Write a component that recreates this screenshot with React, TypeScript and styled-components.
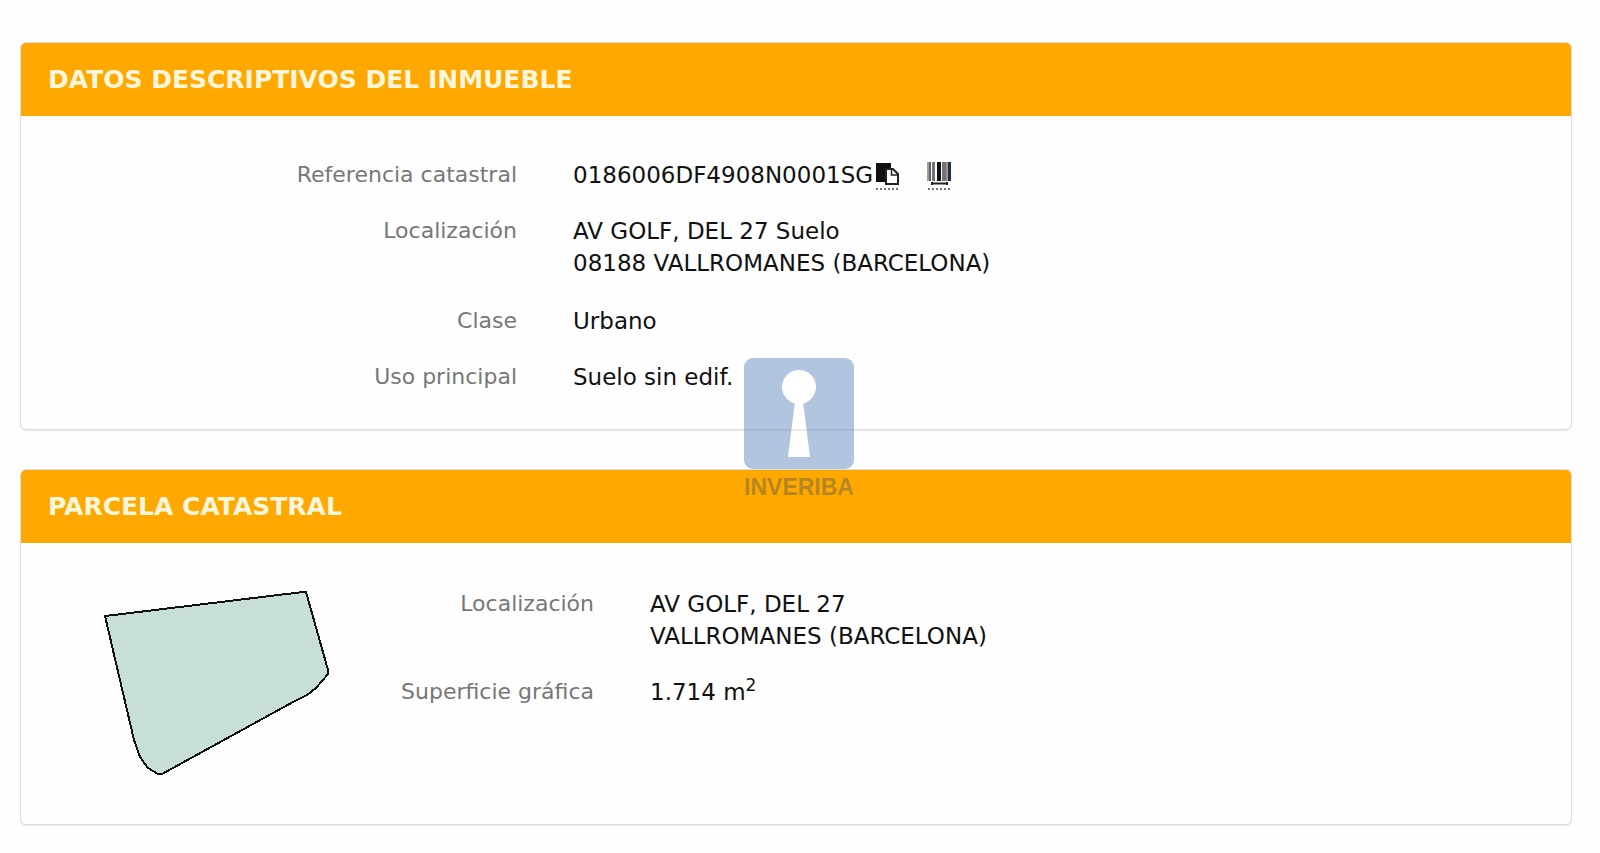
import React from 'react';
import styled, { createGlobalStyle } from 'styled-components';

const GlobalStyle = createGlobalStyle`
  body {
    margin: 0;
    background: #fefefe;
    font-family: Verdana, 'DejaVu Sans', sans-serif;
    font-size: 22px;
    line-height: 32px;
    color: #111;
  }
`;

const Page = styled.main`
  position: relative;
  box-sizing: border-box;
  padding: 42px 28px 28px 20px;
  display: flex;
  flex-direction: column;
  gap: 39px;
`;

const Panel = styled.section`
  border: 1px solid #dcdce0;
  border-radius: 6px;
  overflow: hidden;
  background: #fefefe;
  box-shadow: 0 1px 1px rgba(0, 0, 0, 0.08);
`;

const PanelHeading = styled.h2`
  margin: 0;
  padding: 21px 27px 20px;
  background: #ffa800;
  color: #fff6dc;
  font-size: 25px;
  line-height: 32px;
  font-weight: bold;
`;

const PropertyBody = styled.div`
  padding: 43px 0 36px;
`;

const ParcelBody = styled.div`
  display: flex;
  align-items: flex-start;
  padding: 45px 0 49px;
`;

const Figure = styled.div`
  box-sizing: border-box;
  width: 22%;
  padding-left: 82px;
`;

const Shape = styled.svg`
  display: block;
`;

const Details = styled.dl<{ $labelWidth: string }>`
  flex: 1;
  margin: 0;
  display: grid;
  grid-template-columns: ${(p) => p.$labelWidth} 1fr;
  column-gap: 56px;
  row-gap: 24px;
`;

const Label = styled.dt`
  text-align: right;
  color: #777;
  white-space: nowrap;
`;

const Value = styled.dd`
  margin: 0;
  font-size: 23px;
`;

const AddressValue = styled(Value)`
  padding-bottom: 2px;
`;

const ReferenceValue = styled(Value)`
  display: flex;
  align-items: center;
  height: 32px;
`;

const IconButton = styled.button`
  display: flex;
  margin: 2px 0 0 2px;
  padding: 0;
  border: 0;
  background: none;
  cursor: pointer;

  & + & {
    margin-left: 28px;
  }
`;

const Exponent = styled.sup`
  font-size: 17px;
  line-height: 0;
`;

const Watermark = styled.div`
  position: absolute;
  top: 358px;
  left: 50%;
  width: 112px;
  margin-left: -57px;
  display: flex;
  flex-direction: column;
  align-items: center;
  pointer-events: none;
`;

const WatermarkName = styled.span`
  margin-top: 6px;
  font-family: 'Liberation Sans', Arial, sans-serif;
  font-size: 23px;
  line-height: 24px;
  font-weight: 700;
  color: rgba(110, 100, 70, 0.5);
`;

const CopyIcon = () => (
  <svg width="24" height="28" viewBox="0 0 24 28" aria-hidden="true">
    <path d="M1 1h15v5h-5v14H1z" fill="#111" />
    <path d="M11 7h7l5 5v10H11z" fill="#fff" stroke="#222" strokeWidth="2" />
    <path d="M16.500 7v6H23" fill="none" stroke="#222" strokeWidth="1.500" />
    <path d="M1 27h22" stroke="#777" strokeWidth="2" strokeDasharray="2 2" />
  </svg>
);

const BarcodeIcon = () => (
  <svg width="25" height="28" viewBox="0 0 25 28" aria-hidden="true">
    <path d="M0 0h2v19H0z" fill="#b89b70" />
    <path d="M2 0h2v19H2z" fill="#536480" />
    <path d="M5 0h3v19H5z" fill="#777078" />
    <path d="M10 0h4v19h-4z" fill="#111" />
    <path d="M15 0h4v19h-4z" fill="#77717b" />
    <path d="M19 0h2v19h-2z" fill="#a79683" />
    <path d="M21 0h3v19h-3z" fill="#24305c" />
    <path d="M4 21.500h17M5 20v3M20 20v3" stroke="#222" strokeWidth="2" />
    <path d="M1 27h22" stroke="#777" strokeWidth="2" strokeDasharray="2 2" />
  </svg>
);

const KeyholeLogo = () => (
  <svg width="110" height="111" viewBox="0 0 110 111" aria-hidden="true">
    <rect width="110" height="111" rx="9" fill="rgba(101,139,189,0.5)" />
    <circle cx="55" cy="29" r="17" fill="#fff" />
    <path d="M51 44h8l7 55H44z" fill="#fff" />
    <path d="M47 72h16" stroke="#d8d8dc" strokeWidth="1" />
  </svg>
);

export default function App() {
  return (
    <>
      <GlobalStyle />
      <Page>
        <Panel>
          <PanelHeading>DATOS DESCRIPTIVOS DEL INMUEBLE</PanelHeading>
          <PropertyBody>
            <Details $labelWidth="32%">
              <Label>Referencia catastral</Label>
              <ReferenceValue>
                0186006DF4908N0001SG
                <IconButton type="button" aria-label="Copiar referencia catastral">
                  <CopyIcon />
                </IconButton>
                <IconButton type="button" aria-label="Código de barras">
                  <BarcodeIcon />
                </IconButton>
              </ReferenceValue>
              <Label>Localización</Label>
              <AddressValue>
                AV GOLF, DEL 27 Suelo
                <br />
                08188 VALLROMANES (BARCELONA)
              </AddressValue>
              <Label>Clase</Label>
              <Value>Urbano</Value>
              <Label>Uso principal</Label>
              <Value>Suelo sin edif.</Value>
            </Details>
          </PropertyBody>
        </Panel>
        <Panel>
          <PanelHeading>PARCELA CATASTRAL</PanelHeading>
          <ParcelBody>
            <Figure>
              <Shape width="228" height="187" viewBox="0 0 228 187" role="img" aria-label="Parcela">
                <path
                  d="M2 28L19 26L200 4H203L225 82V86L213 100L204 107L190 114L59 186H55L45 180L37 169L31 152Z"
                  fill="#c7dfd7"
                  stroke="#111"
                  strokeWidth="2"
                  shapeRendering="crispEdges"
                />
              </Shape>
            </Figure>
            <Details $labelWidth="232px">
              <Label>Localización</Label>
              <Value>
                AV GOLF, DEL 27
                <br />
                VALLROMANES (BARCELONA)
              </Value>
              <Label>Superficie gráfica</Label>
              <Value>
                1.714 m<Exponent>2</Exponent>
              </Value>
            </Details>
          </ParcelBody>
        </Panel>
        <Watermark>
          <KeyholeLogo />
          <WatermarkName>INVERIBA</WatermarkName>
        </Watermark>
      </Page>
    </>
  );
}
